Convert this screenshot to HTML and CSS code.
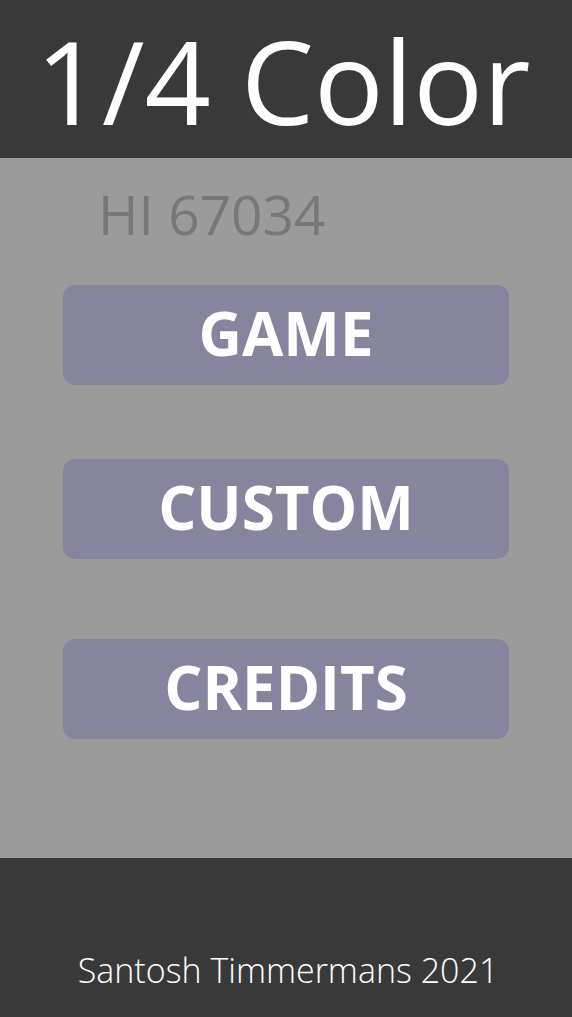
FILE: index.html
```html
<!DOCTYPE html>
<html>
<head>
<meta charset="utf-8">
<link rel="stylesheet" href="styles.css">
</head>
<body>
<div class="page">
  <header class="header"><h1 class="title">1/4 Color</h1></header>
  <main class="main">
    <div class="hi">HI 67034</div>
    <div class="btn btn-game">GAME</div>
    <div class="btn btn-custom">CUSTOM</div>
    <div class="btn btn-credits">CREDITS</div>
  </main>
  <footer class="footer"><div class="credit">Santosh Timmermans 2021</div></footer>
</div>
</body>
</html>
```
FILE: styles.css
```css
html, body { margin: 0; padding: 0; }
body { font-family: "Open Sans", "Noto Sans", sans-serif; background: #9b9b9b; }
.page { width: 572px; height: 1017px; display: flex; flex-direction: column; }
.header { height: 158px; background: #393939; display: flex; justify-content: center; align-items: flex-start; }
.title { margin: 0; color: #fff; font-weight: 400; font-size: 116px; line-height: 1; padding-top: 22px; padding-right: 6px; }
.main { flex: 1; background: #9b9b9b; display: flex; flex-direction: column; padding: 0 63px; }
.hi { color: #777; font-size: 55px; line-height: 1; margin-top: 28px; margin-left: 35px; }
.btn { height: 100px; box-sizing: border-box; padding-bottom: 4px; border-radius: 12px; background: #87859d; color: #fff; font-weight: 700; font-size: 60px; display: flex; align-items: center; justify-content: center; }
.btn-game { margin-top: 44px; }
.btn-custom { margin-top: 74px; }
.btn-credits { margin-top: 80px; }
.footer { height: 159px; background: #393939; display: flex; justify-content: center; align-items: flex-end; }
.credit { color: #fff; font-weight: 300; font-size: 34px; line-height: 1; padding-bottom: 30px; padding-left: 4px; }
```
